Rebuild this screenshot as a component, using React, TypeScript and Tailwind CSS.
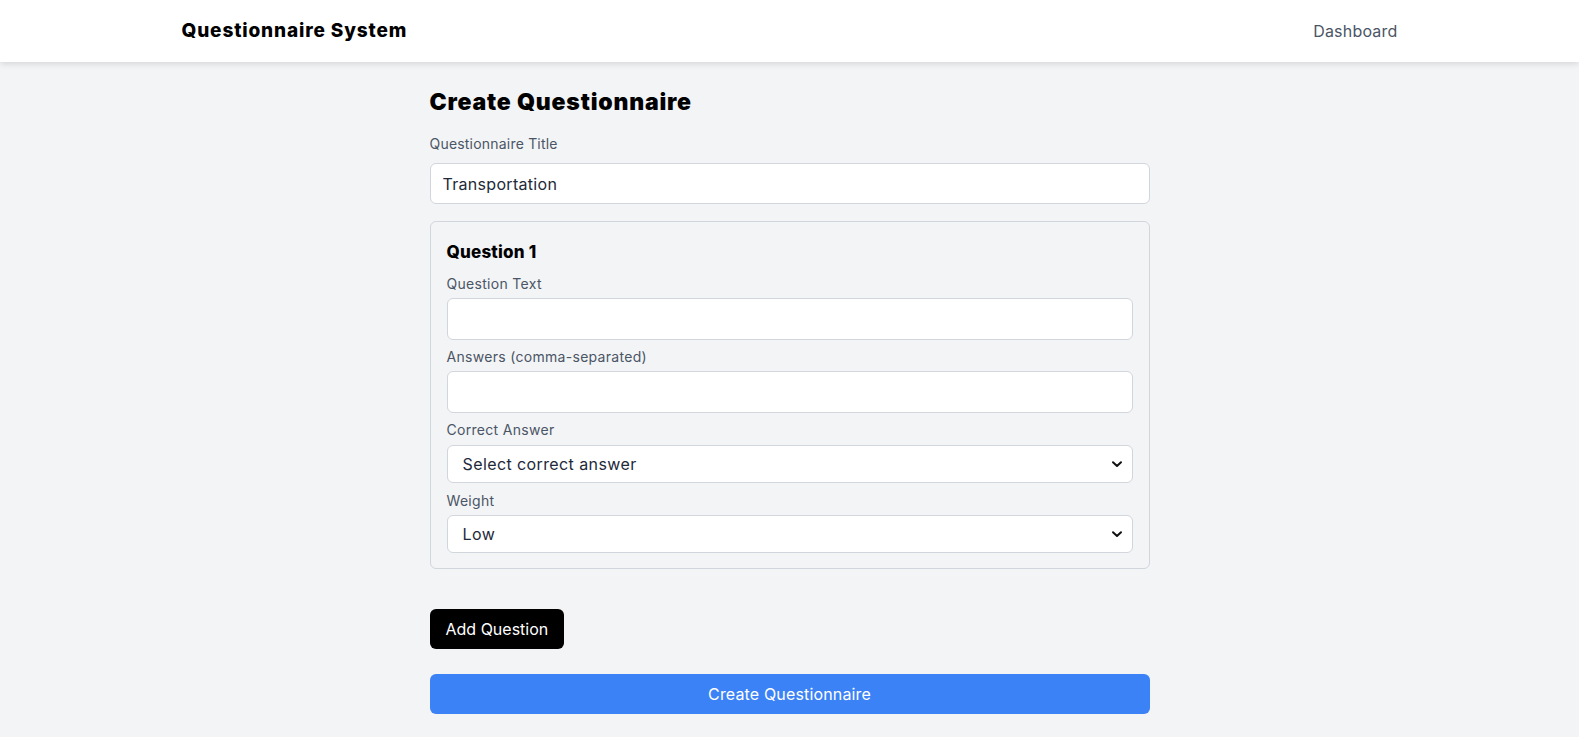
import React, { useState } from "react";

const font = { fontFamily: "Inter, 'Noto Sans', sans-serif" };

function Chevron() {
  return (
    <svg
      className="pointer-events-none absolute right-[10px] top-1/2 -translate-y-1/2"
      width="12"
      height="12"
      viewBox="0 0 12 12"
      fill="none"
    >
      <path d="M2 4.2 6 8l4-3.8" stroke="#111" strokeWidth="2" strokeLinecap="round" strokeLinejoin="round" />
    </svg>
  );
}

interface Question {
  text: string;
  answers: string;
  correct: string;
  weight: string;
}

const App: React.FC = () => {
  const [title, setTitle] = useState("Transportation");
  const [questions, setQuestions] = useState<Question[]>([
    { text: "", answers: "", correct: "", weight: "low" },
  ]);

  const update = (i: number, key: keyof Question, value: string) => {
    setQuestions((qs) => qs.map((q, idx) => (idx === i ? { ...q, [key]: value } : q)));
  };

  return (
    <div className="min-h-screen bg-[#f3f4f6]" style={font}>
      <header className="h-[62px] bg-white shadow-[0_2px_6px_rgba(0,0,0,0.12)]">
        <div className="mx-auto flex h-[62px] max-w-7xl items-center justify-between px-8">
          <h1 className="text-[19px] font-extrabold tracking-[0.85px] text-black">Questionnaire System</h1>
          <a href="#" className="text-[16px] tracking-[0.2px] text-gray-600">
            Dashboard
          </a>
        </div>
      </header>

      <main className="pt-6 pb-5">
        <div className="mx-auto max-w-3xl px-6">
          <h2 className="mb-4 text-[23px] leading-8 font-black tracking-[0.8px] text-black">Create Questionnaire</h2>

          <label className="mb-[9px] block text-[14px] leading-5 tracking-[0.2px] text-gray-600">Questionnaire Title</label>
          <input
            value={title}
            onChange={(e) => setTitle(e.target.value)}
            className="mb-[17px] block h-[41px] w-full rounded-md border border-gray-300 bg-white px-3 text-[16px] tracking-[0.3px] text-gray-800 outline-none"
          />

          {questions.map((q, i) => (
            <div key={i} className="rounded-md border border-gray-300 px-4 pt-4 pb-[15px]">
              <h3 className="mb-2 text-[17px] leading-7 font-extrabold tracking-[0.2px] text-black">Question {i + 1}</h3>

              <label className="mb-1 block text-[14px] leading-5 tracking-[0.3px] text-gray-600">Question Text</label>
              <input
                value={q.text}
                onChange={(e) => update(i, "text", e.target.value)}
                className="mb-[7px] block h-[42px] w-full rounded-md border border-gray-300 bg-white px-3 text-[16px] outline-none"
              />

              <label className="mb-1 block text-[14px] leading-5 tracking-[0.3px] text-gray-600">Answers (comma-separated)</label>
              <input
                value={q.answers}
                onChange={(e) => update(i, "answers", e.target.value)}
                className="mb-[7px] block h-[42px] w-full rounded-md border border-gray-300 bg-white px-3 text-[16px] outline-none"
              />

              <label className="mb-[5px] block text-[14px] leading-5 tracking-[0.3px] text-gray-600">Correct Answer</label>
              <div className="relative mb-[8px]">
                <select
                  value={q.correct}
                  onChange={(e) => update(i, "correct", e.target.value)}
                  className="block h-[38px] w-full appearance-none rounded-md border border-gray-300 bg-white pl-[15px] text-[16px] tracking-[0.4px] text-gray-800 outline-none"
                >
                  <option value="">Select correct answer</option>
                </select>
                <Chevron />
              </div>

              <label className="mb-1 block text-[14px] leading-5 tracking-[0.3px] text-gray-600">Weight</label>
              <div className="relative">
                <select
                  value={q.weight}
                  onChange={(e) => update(i, "weight", e.target.value)}
                  className="block h-[38px] w-full appearance-none rounded-md border border-gray-300 bg-white pl-[15px] text-[16px] tracking-[0.4px] text-gray-800 outline-none"
                >
                  <option value="low">Low</option>
                  <option value="medium">Medium</option>
                  <option value="high">High</option>
                </select>
                <Chevron />
              </div>
            </div>
          ))}

          <button
            type="button"
            onClick={() =>
              setQuestions((qs) => [...qs, { text: "", answers: "", correct: "", weight: "low" }])
            }
            className="mt-10 block h-10 rounded-md bg-black px-4 text-[16px] text-white"
          >
            Add Question
          </button>

          <button
            type="button"
            className="mt-[25px] block h-10 w-full rounded-md bg-[#3b82f6] text-[16px] tracking-[0.15px] text-white"
          >
            Create Questionnaire
          </button>
        </div>
      </main>
    </div>
  );
};

export default App;
